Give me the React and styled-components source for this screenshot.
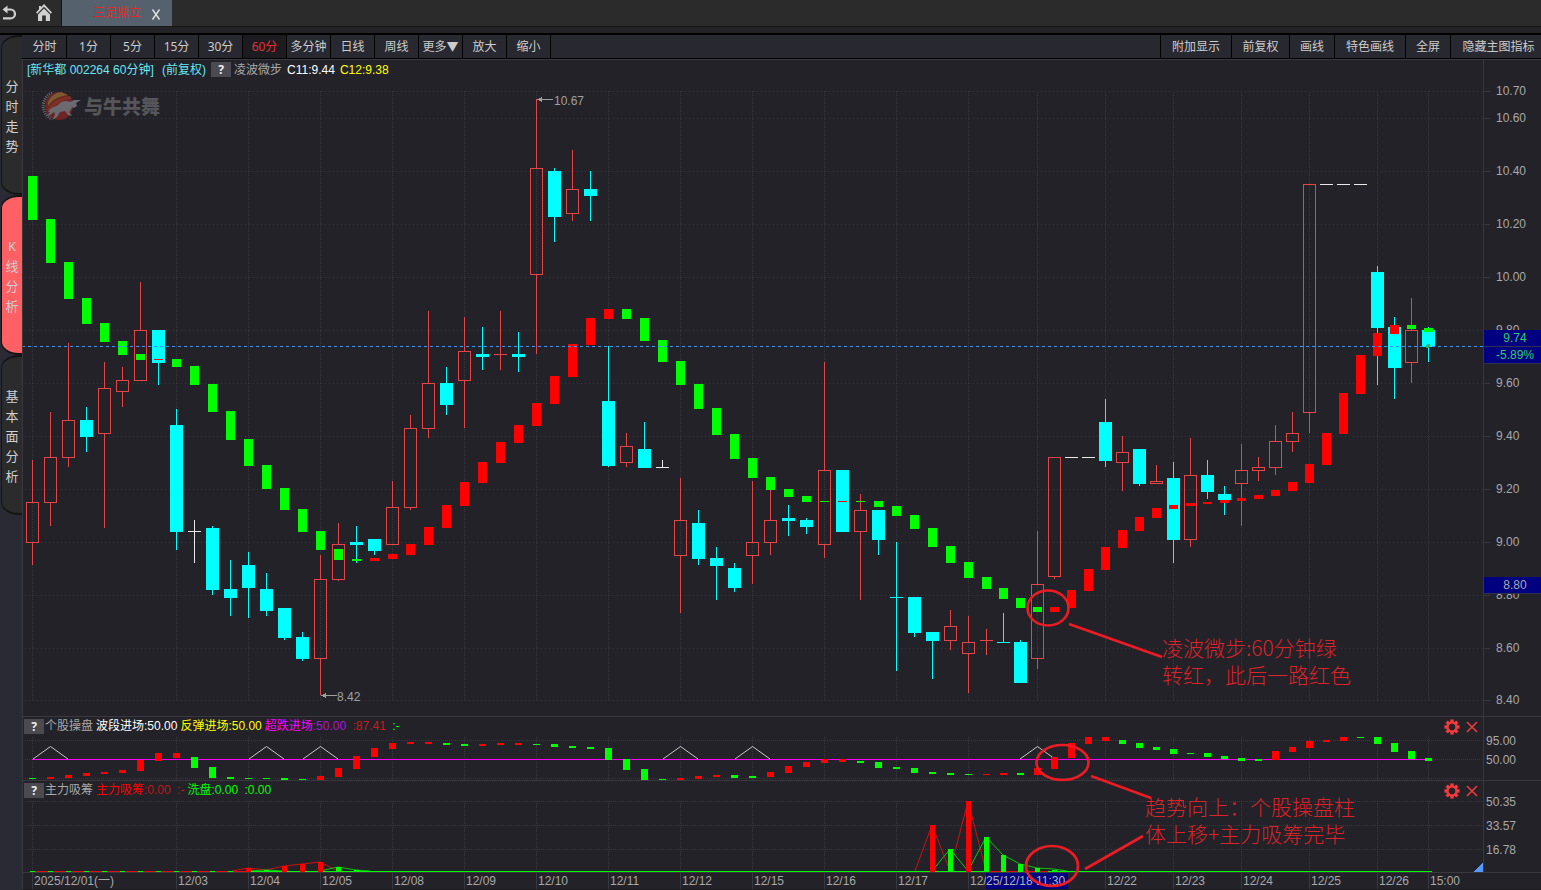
import React, { useState } from "react";
import styled, { createGlobalStyle } from "styled-components";

const RED = "#ff0000";
const GREEN = "#00ff00";
const CYAN = "#00ffff";
const CANDLE_RED = "#e64545";
const GRID = "#38383e";
const PANEL = "#222228";

// [type, high, top, bottom, low], type: r rising, c falling, w flat
const candles = [
  ["r", 460, 502, 543, 565], ["r", 412, 457, 503, 526], ["r", 343, 420, 458, 467], ["c", 407, 420, 437, 452],
  ["r", 362, 388, 434, 528], ["r", 367, 380, 392, 407], ["r", 282, 330, 381, 381], ["c", 330, 330, 363, 385],
  ["c", 409, 425, 532, 550], ["w", 520, 531, 532, 563], ["c", 526, 528, 590, 595], ["c", 560, 589, 598, 616],
  ["c", 552, 565, 588, 618], ["c", 573, 589, 611, 616], ["c", 608, 608, 638, 640], ["c", 632, 637, 659, 661],
  ["r", 555, 579, 659, 695], ["r", 523, 544, 580, 581], ["c", 526, 542, 545, 563], ["c", 539, 539, 551, 555],
  ["r", 481, 507, 545, 545], ["r", 415, 428, 508, 510], ["r", 311, 383, 429, 438], ["c", 367, 383, 405, 415],
  ["r", 317, 351, 381, 428], ["c", 327, 354, 357, 370], ["r", 311, 354, 355, 370], ["c", 332, 354, 357, 372],
  ["r", 99, 168, 275, 354], ["c", 168, 171, 217, 242], ["r", 150, 189, 214, 221], ["c", 171, 189, 196, 221],
  ["c", 346, 401, 466, 467], ["r", 433, 446, 463, 467], ["c", 422, 449, 468, 468], ["w", 460, 467, 468, 468],
  ["r", 478, 520, 556, 613], ["c", 510, 523, 559, 565], ["c", 547, 558, 566, 600], ["c", 563, 568, 588, 592],
  ["r", 481, 542, 556, 584], ["r", 490, 520, 543, 555], ["c", 505, 518, 521, 536], ["c", 518, 520, 527, 534],
  ["r", 362, 470, 545, 558], ["c", 470, 470, 532, 532], ["r", 494, 510, 532, 600], ["c", 510, 510, 540, 555],
  ["c", 542, 597, 598, 671], ["c", 597, 597, 633, 637], ["c", 632, 632, 641, 679], ["r", 610, 626, 641, 650],
  ["r", 616, 642, 654, 693], ["r", 629, 640, 641, 655], ["c", 613, 642, 643, 643], ["c", 640, 642, 683, 683],
  ["r", 531, 584, 659, 669], ["r", 457, 457, 577, 579], ["w", 457, 457, 458, 458], ["w", 457, 457, 458, 458],
  ["c", 399, 422, 461, 467], ["r", 436, 452, 463, 491], ["c", 449, 449, 484, 486], ["r", 465, 481, 484, 484],
  ["c", 462, 478, 540, 563], ["r", 438, 475, 540, 547], ["c", 460, 475, 492, 499], ["c", 486, 494, 500, 515],
  ["r", 444, 470, 484, 526], ["r", 457, 467, 471, 481], ["r", 425, 441, 468, 475], ["r", 412, 433, 442, 452],
  ["r", 184, 184, 413, 433], ["w", 184, 184, 185, 185], ["w", 184, 184, 185, 185], ["w", 184, 184, 185, 185],
  ["c", 266, 272, 328, 385], ["c", 317, 327, 368, 399], ["r", 298, 330, 363, 383], ["c", 327, 330, 347, 362],
];

// [colour, top, bottom]
const steps = [
  ["g", 176, 220], ["g", 219, 263], ["g", 262, 299], ["g", 298, 324], ["g", 323, 342], ["g", 341, 355],
  ["g", 354, 360], ["r", 359, 360], ["g", 359, 367], ["g", 366, 385], ["g", 384, 412], ["g", 411, 440],
  ["g", 439, 466], ["g", 465, 489], ["g", 488, 510], ["g", 509, 532], ["g", 531, 550], ["g", 549, 560],
  ["g", 559, 561], ["r", 558, 561], ["r", 554, 559], ["r", 544, 555], ["r", 527, 545], ["r", 505, 528],
  ["r", 482, 506], ["r", 462, 483], ["r", 442, 463], ["r", 425, 443], ["r", 403, 426], ["r", 376, 404],
  ["r", 344, 377], ["r", 318, 345], ["r", 309, 319], ["g", 309, 319], ["g", 318, 341], ["g", 340, 362],
  ["g", 361, 385], ["g", 384, 409], ["g", 408, 435], ["g", 434, 459], ["g", 458, 478], ["g", 477, 490],
  ["g", 489, 497], ["g", 496, 502], ["g", 501, 502], ["r", 501, 502], ["g", 501, 502], ["g", 501, 507],
  ["g", 506, 516], ["g", 515, 529], ["g", 528, 547], ["g", 546, 563], ["g", 562, 578], ["g", 577, 589],
  ["g", 588, 599], ["g", 598, 608], ["g", 607, 612], ["r", 607, 612], ["r", 590, 608], ["r", 569, 591],
  ["r", 547, 570], ["r", 530, 548], ["r", 517, 531], ["r", 508, 518], ["r", 505, 509], ["r", 503, 506],
  ["r", 502, 504], ["r", 500, 503], ["r", 498, 501], ["r", 495, 499], ["r", 490, 496], ["r", 482, 491],
  ["r", 464, 483], ["r", 433, 465], ["r", 393, 434], ["r", 355, 394], ["r", 333, 356], ["r", 325, 334],
  ["g", 325, 329], ["g", 328, 332],
];

const trend = [
  ["g", 778, 779], ["r", 777, 779], ["r", 775, 778], ["r", 773, 776], ["r", 772, 774], ["r", 770, 773],
  ["r", 760, 771], ["r", 753, 761], ["r", 753, 758], ["g", 757, 768], ["g", 767, 778], ["g", 777, 779],
  ["g", 778, 779], ["g", 778, 779], ["g", 778, 780], ["g", 779, 780], ["r", 776, 780], ["r", 768, 777],
  ["r", 756, 769], ["r", 748, 757], ["r", 743, 749], ["r", 742, 744], ["r", 742, 744], ["g", 743, 745],
  ["g", 744, 746], ["r", 744, 746], ["r", 743, 745], ["r", 743, 745], ["g", 744, 745], ["g", 744, 747],
  ["g", 746, 748], ["g", 747, 749], ["g", 748, 760], ["g", 759, 770], ["g", 769, 780], ["g", 779, 780],
  ["r", 778, 780], ["r", 776, 779], ["r", 775, 777], ["g", 775, 778], ["g", 776, 778], ["r", 772, 777],
  ["r", 766, 773], ["r", 762, 767], ["r", 759, 763], ["r", 759, 762], ["g", 761, 763], ["g", 762, 768],
  ["g", 767, 769], ["g", 768, 773], ["g", 772, 774], ["g", 773, 775], ["g", 774, 775], ["r", 774, 775],
  ["r", 773, 775], ["g", 773, 775], ["r", 768, 775], ["r", 757, 769], ["r", 743, 758], ["r", 737, 744],
  ["r", 737, 741], ["g", 740, 744], ["g", 743, 748], ["g", 747, 750], ["g", 749, 754], ["g", 753, 754],
  ["g", 753, 757], ["g", 756, 759], ["g", 758, 761], ["g", 759, 761], ["r", 751, 760], ["r", 747, 752],
  ["r", 741, 748], ["r", 740, 742], ["r", 737, 741], ["g", 737, 738], ["g", 737, 744], ["g", 743, 752],
  ["g", 751, 759], ["g", 758, 761],
];

// [bar index, colour, top]
const volume = [
  [12, "r", 868], [13, "g", 870], [14, "r", 866], [15, "r", 864], [16, "r", 862], [17, "g", 867], [18, "g", 870],
  [50, "r", 825], [51, "g", 849], [52, "r", 801], [53, "g", 837], [54, "g", 855], [55, "g", 864], [56, "g", 868],
  [57, "g", 870],
];

const signals = [50, 266, 320, 680, 752, 1037];
const gridX = [32, 176, 248, 320, 392, 464, 536, 608, 680, 752, 824, 896, 968, 1037, 1105, 1173, 1241, 1309, 1377, 1428];

const priceTicks = [
  ["10.70", 91], ["10.60", 118], ["10.40", 171], ["10.20", 224], ["10.00", 277], ["9.80", 330], ["9.60", 383],
  ["9.40", 436], ["9.20", 489], ["9.00", 542], ["8.80", 595], ["8.60", 648], ["8.40", 700],
];

const dates = [
  ["2025/12/01(一)", 32], ["12/03", 176], ["12/04", 248], ["12/05", 320], ["12/08", 392], ["12/09", 464],
  ["12/10", 536], ["12/11", 608], ["12/12", 680], ["12/15", 752], ["12/16", 824], ["12/17", 896], ["12/18", 968],
  ["12/22", 1105], ["12/23", 1173], ["12/24", 1241], ["12/25", 1309], ["12/26", 1377], ["15:00", 1428],
];

const periods = ["分时", "1分", "5分", "15分", "30分", "60分", "多分钟", "日线", "周线", "更多▼", "放大", "缩小"];
const tools = [["附加显示", 71], ["前复权", 58], ["画线", 45], ["特色画线", 71], ["全屏", 45], ["隐藏主图指标", 91]];
const sections = ["分时走势", "K线分析", "基本面分析"];

const barX = (i) => (i <= 53 ? 32 + 18 * i : 986 + 17 * (i - 53));
const tone = (c) => (c === "g" ? GREEN : RED);

const GlobalStyle = createGlobalStyle`
  * {
    box-sizing: border-box;
  }
  body {
    margin: 0;
    background: #2a2a34;
    color: #a8a8a8;
    font-family: "Liberation Sans", "Noto Sans CJK SC", sans-serif;
    font-size: 12px;
    line-height: 16px;
    overflow: hidden;
  }
  button {
    margin: 0;
    padding: 0;
    border: none;
    background: none;
    color: inherit;
    font: inherit;
    cursor: pointer;
  }
`;

const Page = styled.div`
  display: flex;
  flex-direction: column;
  height: 100vh;
`;

const TopBar = styled.header`
  display: flex;
  height: 27px;
  background: #2b2b2b;
  border-bottom: 1px solid #161616;
`;

const NavButtons = styled.nav`
  display: flex;
  align-items: center;
  gap: 20px;
  width: 62px;
  padding-left: 2px;
  border-right: 1px solid #161616;
  svg {
    display: block;
  }
`;

const PageTab = styled.div`
  display: flex;
  align-items: center;
  justify-content: flex-end;
  gap: 10px;
  width: 110px;
  padding-right: 11px;
  background: #55626e;
`;

const TabTitle = styled.span`
  padding-bottom: 1px;
  color: #e0282d;
`;

const CloseTab = styled.button`
  color: #e0e0e0;
  display: flex;
  padding-top: 2px;
`;

const Strip = styled.div`
  height: 8px;
  background: #232325;
  border-bottom: 2px solid #000;
`;

const Body = styled.div`
  display: flex;
  flex: 1;
  min-height: 0;
`;

const Rail = styled.nav`
  display: flex;
  flex-direction: column;
  width: 22px;
  padding-left: 1px;
`;

const RailTab = styled.button`
  display: flex;
  flex-direction: column;
  align-items: center;
  justify-content: center;
  height: 160px;
  padding-top: 1px;
  border: 2px solid #141416;
  border-width: 2px 0 2px 1px;
  border-radius: 18px 0 0 18px / 13px 0 0 13px;
  background: ${(props) => (props.$active ? "#ff6064" : "#2b2b2b")};
  color: #cfcfd4;
  font-family: "Noto Sans", "Noto Sans CJK SC", sans-serif;
  font-size: 13px;
  line-height: 20px;
`;

const Main = styled.main`
  display: flex;
  flex: 1;
  flex-direction: column;
  min-width: 0;
`;

const Toolbar = styled.div`
  display: flex;
  justify-content: space-between;
  height: 24px;
  padding-left: 1px;
  background: #282830;
  border-bottom: 1px solid #000;
`;

const ToolGroup = styled.div`
  display: flex;
`;

const Tool = styled.button`
  width: ${(props) => props.$width}px;
  padding-left: ${(props) => props.$indent || 0}px;
  border: 0 solid #000;
  border-width: ${(props) => (props.$side === "left" ? "0 0 0 1px" : "0 1px 0 0")};
  background: ${(props) => (props.$active ? "#1c1c20" : "transparent")};
  color: ${(props) => (props.$active ? "#e03338" : "#cccccc")};
  font-family: "Noto Sans", "Noto Sans CJK SC", sans-serif;
  white-space: nowrap;
`;

const Charts = styled.div`
  position: relative;
  display: flex;
  flex: 1;
  flex-direction: column;
  min-height: 0;
  padding-bottom: 1px;
  background: #1c1c21;
`;

const Panel = styled.section`
  display: grid;
  flex: ${(props) => props.$share} 1 0;
  grid-template-columns: 1fr 58px;
  min-height: 0;
  border: 1px solid ${GRID};
  border-width: 1px 0 0 1px;
  background: ${PANEL};
`;

const Plot = styled.div`
  position: relative;
  display: flex;
  flex-direction: column;
  min-width: 0;
  min-height: 0;
`;

const Legend = styled.div`
  display: flex;
  align-items: center;
  flex: none;
  gap: ${(props) => props.$gap}px;
  height: ${(props) => props.$height}px;
  padding-left: ${(props) => props.$indent}px;
  white-space: pre;
`;

const Help = styled.button`
  width: 20px;
  height: 15px;
  background: #4a4a50;
  color: #f0f0f0;
  font-weight: bold;
  font-family: "Noto Sans", sans-serif;
  line-height: 15px;
  margin-right: -2px;
`;

const Value = styled.span`
  color: ${(props) => props.$color};
`;

const PanelActions = styled.div`
  display: flex;
  gap: 6px;
  align-items: center;
  margin-left: auto;
  padding: 2px 5px 0 0;
  svg {
    display: block;
  }
`;

const ChartSvg = styled.svg`
  display: block;
  flex: 1;
  width: 100%;
  min-height: 0;
`;

const Axis = styled.div`
  position: relative;
  border-left: 1px solid ${GRID};
`;

const Tick = styled.span`
  position: absolute;
  left: ${(props) => (props.$marked ? 12 : 2)}px;
  transform: translateY(-50%);
  &::before {
    content: "";
    display: ${(props) => (props.$marked ? "block" : "none")};
    position: absolute;
    top: 8px;
    left: -12px;
    width: 6px;
    height: 1px;
    background: ${GRID};
  }
`;

const PriceBadge = styled.span`
  position: absolute;
  left: 0;
  right: 0;
  height: 17px;
  padding-left: 5px;
  border-bottom: 1px solid #303050;
  background: #000080;
  color: ${(props) => props.$color};
  text-align: center;
`;

const Watermark = styled.div`
  position: absolute;
  top: 30px;
  left: 16px;
  display: flex;
  align-items: center;
  gap: 3px;
  color: #55555a;
  font-family: "Noto Sans CJK SC", sans-serif;
  font-size: 19px;
  font-weight: 900;
  line-height: 32px;
`;

const Extreme = styled.span`
  position: absolute;
  transform: translateY(-50%);
  color: #a0a0a0;
`;

const TimeAxis = styled.div`
  position: relative;
  flex: none;
  height: 17px;
  border: 1px solid ${GRID};
  border-width: 1px 0 0 1px;
  background: ${PANEL};
`;

const DateLabel = styled.span`
  position: absolute;
  top: 0;
  height: 16px;
  padding-left: 1px;
  border-left: 1px solid ${GRID};
  white-space: nowrap;
`;

const Cursor = styled.span`
  position: absolute;
  top: 0;
  height: 16px;
  overflow: hidden;
  background: #000080;
  color: #b4b4b4;
  white-space: nowrap;
`;

const Notes = styled.div`
  position: absolute;
  inset: 0;
  pointer-events: none;
  svg {
    display: block;
    width: 100%;
    height: 100%;
  }
`;

const Note = styled.p`
  position: absolute;
  margin: 0;
  color: #dc222a;
  font-family: "Noto Sans CJK SC", sans-serif;
  font-size: 21px;
  font-weight: 300;
  line-height: 27px;
  white-space: pre;
`;

const percent = (value, start, size) => `${((value - start) / size) * 100}%`;

function Grid({ top, bottom, rows, gap }) {
  return (
    <g stroke={GRID}>
      {rows.map((y) => (
        <line key={y} x1="25" x2="1483" y1={y + 0.5} y2={y + 0.5} strokeDasharray={gap} />
      ))}
      {gridX.map((x) => (
        <line key={x} x1={x + 0.5} x2={x + 0.5} y1={top} y2={bottom} strokeDasharray="1 1" />
      ))}
    </g>
  );
}

function Candle({ x, data }) {
  const [type, high, top, bottom, low] = data;
  const color = { r: CANDLE_RED, c: CYAN, w: "#e8e8e8" }[type];
  const hollow = type === "r" && bottom - top > 1;
  return (
    <g fill={color}>
      {top > high && <rect x={x} y={high} width="1" height={top - high} />}
      {low > bottom && <rect x={x} y={bottom} width="1" height={low - bottom} />}
      {hollow ? (
        <rect x={x - 5.5} y={top + 0.5} width="12" height={bottom - top - 1} fill="none" stroke={color} />
      ) : (
        <rect x={x - 6} y={top} width="13" height={bottom - top} />
      )}
    </g>
  );
}

function Bars({ data, half }) {
  return data.map(([c, top, bottom], i) => (
    <rect key={i} x={barX(i) - half} y={top} width={half * 2 + 1} height={bottom - top} fill={tone(c)} />
  ));
}

function Actions() {
  return (
    <PanelActions>
      <button type="button" aria-label="设置">
        <svg width="16" height="16" viewBox="-8 -8 16 16">
          {[0, 45, 90, 135, 180, 225, 270, 315].map((a) => (
            <rect key={a} x="-1.7" y="-7.6" width="3.4" height="4" fill="#f03c3c" transform={`rotate(${a})`} />
          ))}
          <circle r="4.6" fill="none" stroke="#f03c3c" strokeWidth="2.2" />
        </svg>
      </button>
      <button type="button" aria-label="关闭">
        <svg width="12" height="12" viewBox="0 0 12 12">
          <path d="M1 1L11 11M11 1L1 11" stroke="#f03c3c" strokeWidth="1.5" />
        </svg>
      </button>
    </PanelActions>
  );
}

function Logo() {
  return (
    <svg width="42" height="32" viewBox="0 0 42 32">
      <path d="M13 3A14 14 0 0 0 13 29" fill="none" stroke="#6a6a70" strokeWidth="3" strokeDasharray="1 1.2" />
      <circle cx="20" cy="16" r="14" fill="#6c2427" />
      <path d="M9 12C12 6 17 2 23 2.400L29 5C21 6 14 9 9 16Z" fill="#7b5a30" />
      <path d="M8 20C13 11 21 7 31 6L33 9C25 9 18 13 12 20Z" fill="#7c3026" />
      <path
        d="M9 22C11 18 15 17 19 15C22 11 27 10 31 12L35 10L42 10L37 13L38 16L35 18L33 17C32 20 31 21 30 22L33 26L29 25L26 21L21 22L18 27L13 30L16 25L15 22L11 25L8 26L11 22Z"
        fill="#6a6a70"
      />
    </svg>
  );
}

function PriceChart() {
  return (
    <Panel $share={656}>
      <Plot>
        <Legend $height={19} $indent={4} $gap={5}>
          <Value $color="#66e8f5">[新华都 002264 60分钟]</Value>
          <Value $color="#66e8f5"> (前复权)</Value>
          <Help type="button">?</Help>
          <span>凌波微步</span>
          <Value $color="#ffffff">C11:9.44</Value>
          <Value $color="#ffff00">C12:9.38</Value>
        </Legend>
        <ChartSvg viewBox="23 79 1460 637" preserveAspectRatio="none" shapeRendering="crispEdges">
          <Grid top={91} bottom={701} rows={priceTicks.map((t) => t[1])} gap="1 3" />
          {candles.map((c, i) => (
            <Candle key={i} x={barX(i)} data={c} />
          ))}
          <Bars data={steps} half={4} />
          <line x1="22" x2="1483" y1="346.5" y2="346.5" stroke="#3399ff" strokeDasharray="3 3" />
          <circle cx="1428" cy="346" r="2" fill="#2fb56a" />
          <g fill="#a0a0a0">
            <rect x="537" y="99" width="16" height="1" />
            <path d="M537 99.5L542 97V102Z" />
            <rect x="321" y="695" width="16" height="1" />
            <path d="M321 695.5L326 693V698Z" />
          </g>
        </ChartSvg>
        <Extreme style={{ left: percent(554, 23, 1460), top: percent(101, 60, 656) }}>10.67</Extreme>
        <Extreme style={{ left: percent(337, 23, 1460), top: percent(697, 60, 656) }}>8.42</Extreme>
        <Watermark>
          <Logo />
          与牛共舞
        </Watermark>
      </Plot>
      <Axis>
        {priceTicks.map(([label, y]) => (
          <Tick key={label} $marked style={{ top: percent(y, 60, 656) }}>
            {label}
          </Tick>
        ))}
        <PriceBadge $color="#33cc66" style={{ top: percent(330, 60, 656) }}>
          9.74
        </PriceBadge>
        <PriceBadge $color="#33cc66" style={{ top: percent(347, 60, 656) }}>
          -5.89%
        </PriceBadge>
        <PriceBadge $color="#a8a8a8" style={{ top: percent(577, 60, 656) }}>
          8.80
        </PriceBadge>
      </Axis>
    </Panel>
  );
}

function TrendChart() {
  return (
    <Panel $share={63}>
      <Plot>
        <Legend $height={18} $indent={1} $gap={3}>
          <Help type="button">?</Help>
          <span>个股操盘</span>
          <Value $color="#ffffff">波段进场:50.00</Value>
          <Value $color="#ffff00">反弹进场:50.00</Value>
          <Value $color="#ff00ff">
            超跌进场<Value $color="#b414d2">:50.00</Value>
          </Value>
          <Value $color="#d01818"> :87.41</Value>
          <Value $color={GREEN}> :-</Value>
          <Actions />
        </Legend>
        <ChartSvg viewBox="23 735 1460 45" preserveAspectRatio="none" shapeRendering="crispEdges">
          <Grid top={737} bottom={780} rows={[740, 759, 778]} gap="1 1" />
          <rect x="32" y="759" width="1400" height="1" fill="#ff00ff" />
          {signals.map((x) => (
            <path
              key={x}
              d={`M${x - 17} 759L${x + 0.5} 746.5L${x + 18} 759`}
              fill="none"
              stroke="#c8c8c8"
              shapeRendering="auto"
            />
          ))}
          <Bars data={trend} half={3} />
        </ChartSvg>
      </Plot>
      <Axis>
        <Tick style={{ top: percent(741, 717, 63) }}>95.00</Tick>
        <Tick style={{ top: percent(760, 717, 63) }}>50.00</Tick>
      </Axis>
    </Panel>
  );
}

function VolumeChart() {
  return (
    <Panel $share={91}>
      <Plot>
        <Legend $height={18} $indent={1} $gap={3}>
          <Help type="button">?</Help>
          <span>主力吸筹</span>
          <Value $color={RED}>
            主力吸筹<Value $color="#c01818">:0.00</Value>
          </Value>
          <Value $color="#d01818"> :-</Value>
          <Value $color={GREEN}>洗盘:0.00</Value>
          <Value $color={GREEN}> :0.00</Value>
          <Actions />
        </Legend>
        <ChartSvg viewBox="23 799 1460 73" preserveAspectRatio="none" shapeRendering="crispEdges">
          <Grid top={801} bottom={872} rows={[801, 825, 849]} gap="1 1" />
          <g fill="none" shapeRendering="auto">
            <path
              d="M232 871L248 868L266 870L284 866L302 864L320 862L338 871M915 871L932 825L950 871L968 801L986 871"
              stroke="#d01010"
            />
            <path
              d="M248 871L266 870L284 871M320 871L338 867L356 870L370 871M932 871L950 849L968 871L986 837L1003 855L1020 864L1037 868L1054 869L1067 871"
              stroke="#10c010"
            />
          </g>
          <rect x="32" y="871" width="1400" height="1" fill={GREEN} />
          <rect x="32" y="871" width="214" height="1" fill="#e01010" />
          <rect x="988" y="871" width="60" height="1" fill="#e01010" />
          {Array.from({ length: 12 }, (_, i) => (
            <rect key={i} x={barX(i) - 2} y="871" width="5" height="1" fill={GREEN} />
          ))}
          {volume.map(([i, c, top]) => (
            <rect key={i} x={barX(i) - 2} y={top} width="5" height={872 - top} fill={tone(c)} />
          ))}
          <path d="M1473 872L1483 862V872Z" fill="#5599ff" />
        </ChartSvg>
      </Plot>
      <Axis>
        <Tick style={{ top: percent(802, 781, 91) }}>50.35</Tick>
        <Tick style={{ top: percent(826, 781, 91) }}>33.57</Tick>
        <Tick style={{ top: percent(850, 781, 91) }}>16.78</Tick>
      </Axis>
    </Panel>
  );
}

function Annotations() {
  return (
    <Notes>
      <svg viewBox="22 59 1519 831" preserveAspectRatio="none">
        <g fill="none" stroke="#ed1c24" strokeWidth="2.6">
          <ellipse cx="1048" cy="608" rx="20.5" ry="17.5" />
          <path d="M1069 624L1162 657" />
          <ellipse cx="1062.5" cy="762.5" rx="26" ry="17.5" />
          <path d="M1091 776L1151 798" />
          <ellipse cx="1052" cy="866" rx="26" ry="20" />
          <path d="M1085 869L1143 836" />
        </g>
      </svg>
      <Note style={{ left: percent(1162, 22, 1519), top: percent(634, 59, 831) }}>
        {"凌波微步:60分钟绿\n转红，此后一路红色"}
      </Note>
      <Note style={{ left: percent(1145, 22, 1519), top: percent(793, 59, 831) }}>
        {"趋势向上：个股操盘柱\n体上移+主力吸筹完毕"}
      </Note>
    </Notes>
  );
}

export default function App() {
  const [period, setPeriod] = useState("60分");
  const [section, setSection] = useState("K线分析");

  return (
    <>
      <GlobalStyle />
      <Page>
        <TopBar>
          <NavButtons>
            <button type="button" aria-label="返回">
              <svg width="14" height="16" viewBox="0 0 14 16">
                <path d="M4 4.5H8.5A4.4 4.4 0 0 1 8.5 13.4H1" fill="none" stroke="#d0d0d0" strokeWidth="2.2" />
                <path d="M0.5 4.5L5.5 0.5V8.5Z" fill="#d0d0d0" />
              </svg>
            </button>
            <button type="button" aria-label="首页">
              <svg width="16" height="18" viewBox="0 0 16 18" fill="#d0d0d0">
                <path d="M8 0L16 8.4L14.8 9.8L8 2.8L1.2 9.8L0 8.4L3 5.2V2H5V3.2Z" />
                <path d="M8 4.4L14 10.6V17H9.8V11.6H6.2V17H2V10.6Z" />
              </svg>
            </button>
          </NavButtons>
          <PageTab>
            <TabTitle>三足鼎立</TabTitle>
            <CloseTab type="button" aria-label="关闭标签">
              <svg width="10" height="11" viewBox="0 0 10 11">
                <path d="M1.5 0.5L8.5 10.5M8.5 0.5L1.5 10.5" stroke="#e0e0e0" strokeWidth="1.4" />
              </svg>
            </CloseTab>
          </PageTab>
        </TopBar>
        <Strip />
        <Body>
          <Rail>
            {sections.map((name) => (
              <RailTab key={name} type="button" $active={name === section} onClick={() => setSection(name)}>
                {name.split("").map((char) => (
                  <span key={char}>{char}</span>
                ))}
              </RailTab>
            ))}
          </Rail>
          <Main>
            <Toolbar>
              <ToolGroup>
                {periods.map((name) => (
                  <Tool key={name} type="button" $width={44} $active={name === period} onClick={() => setPeriod(name)}>
                    {name}
                  </Tool>
                ))}
              </ToolGroup>
              <ToolGroup>
                {tools.map(([name, width]) => (
                  <Tool key={name} type="button" $width={width} $side="left" $indent={width > 80 ? 5 : 0}>
                    {name}
                  </Tool>
                ))}
              </ToolGroup>
            </Toolbar>
            <Charts>
              <PriceChart />
              <TrendChart />
              <VolumeChart />
              <TimeAxis>
                {dates.map(([label, x]) => (
                  <DateLabel key={label} style={{ left: percent(x, 23, 1518) }}>
                    {label}
                  </DateLabel>
                ))}
                <Cursor style={{ left: percent(986, 23, 1518), width: percent(82, 0, 1518) }}>25/12/18 11:30</Cursor>
              </TimeAxis>
              <Annotations />
            </Charts>
          </Main>
        </Body>
      </Page>
    </>
  );
}
